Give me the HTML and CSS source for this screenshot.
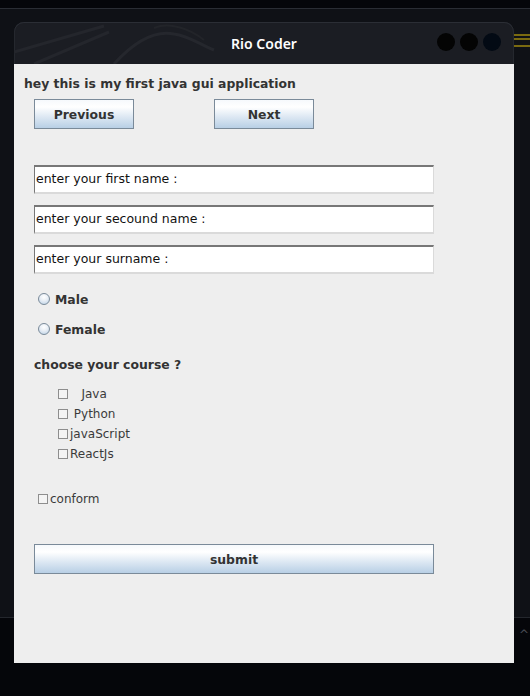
FILE: index.html
```html
<!DOCTYPE html>
<html>
<head>
<meta charset="utf-8">
<link rel="stylesheet" href="styles.css">
</head>
<body>
<div class="desktop">
  <div class="deco-lines"><span></span><span></span><span></span></div>
  <div class="deco-chevron">^</div>
  <div class="window">
    <div class="titlebar">
      <svg class="dragon" width="300" height="42" viewBox="0 0 300 42">
        <path d="M0 30 L90 4" stroke="#24262c" stroke-width="3" fill="none"/>
        <path d="M20 42 L95 10" stroke="#24262c" stroke-width="3" fill="none"/>
        <path d="M100 42 C120 20 140 8 160 12 C175 14 185 22 200 28" stroke="#25272d" stroke-width="3" fill="none"/>
        <path d="M140 6 C155 0 175 6 190 18" stroke="#222429" stroke-width="2" fill="none"/>
      </svg>
      <div class="title">Rio Coder</div>
      <div class="controls">
        <span class="dot"></span><span class="dot"></span><span class="dot blue"></span>
      </div>
    </div>
    <div class="content">
      <div class="heading">hey this is my first java gui application</div>
      <div class="nav-row">
        <button class="btn nav">Previous</button>
        <button class="btn nav">Next</button>
      </div>
      <div class="fields">
        <div class="field">enter your first name :</div>
        <div class="field">enter your secound name :</div>
        <div class="field">enter your surname :</div>
      </div>
      <div class="radios">
        <div class="radio-row"><span class="radio"></span><span class="radio-label">Male</span></div>
        <div class="radio-row"><span class="radio"></span><span class="radio-label">Female</span></div>
      </div>
      <div class="section-label">choose your course ?</div>
      <div class="courses">
        <div class="check-row"><span class="box"></span><span class="check-label">   Java</span></div>
        <div class="check-row"><span class="box"></span><span class="check-label"> Python</span></div>
        <div class="check-row"><span class="box"></span><span class="check-label">javaScript</span></div>
        <div class="check-row"><span class="box"></span><span class="check-label">ReactJs</span></div>
      </div>
      <div class="check-row conform"><span class="box"></span><span class="check-label">conform</span></div>
      <button class="btn submit">submit</button>
    </div>
  </div>
</div>
</body>
</html>
```
FILE: styles.css
```css
html, body {
  margin: 0;
  padding: 0;
}
body {
  width: 530px;
  height: 696px;
  overflow: hidden;
  background:
    linear-gradient(#05060a 0, #05060a 8px, #2a2d34 8px, #2a2d34 9px, #0f1116 9px, #0f1116 617px, #24272d 617px, #24272d 618px, #05060a 618px);
}
.desktop {
  position: relative;
  width: 530px;
  height: 696px;
  padding-top: 22px;
  box-sizing: border-box;
  font-family: "DejaVu Sans", sans-serif;
}
.deco-lines {
  position: absolute;
  left: 514px;
  top: 34px;
  width: 16px;
}
.deco-lines span {
  display: block;
  height: 2px;
  background: #7a6a10;
  margin-bottom: 2px;
}
.deco-lines span:nth-child(3) {
  margin-top: 5px;
}
.deco-chevron {
  position: absolute;
  left: 519px;
  top: 628px;
  color: #4a4d55;
  font-size: 12px;
}
.window {
  margin-left: 14px;
  width: 500px;
}
.titlebar {
  position: relative;
  height: 42px;
  background: #1b1d23;
  border-radius: 10px 10px 0 0;
  box-shadow: inset 0 1px 0 #2b2e35, inset 1px 0 0 #25282e, inset -1px 0 0 #25282e;
  display: flex;
  align-items: center;
  justify-content: center;
  overflow: hidden;
}
.dragon {
  position: absolute;
  left: 0;
  top: 0;
}
.title {
  position: relative;
  color: #ffffff;
  font-family: "Noto Sans", sans-serif;
  font-weight: 600;
  font-size: 14px;
}
.controls {
  position: absolute;
  right: 13px;
  top: 11px;
  display: flex;
  gap: 5px;
}
.dot {
  width: 18px;
  height: 18px;
  border-radius: 50%;
  background: #040404;
}
.dot.blue {
  background: #030a14;
}
.content {
  height: 599px;
  background: #eeeeee;
  padding: 12px 0 0 10px;
  box-sizing: border-box;
  color: #333333;
}
.heading {
  font-weight: bold;
  font-size: 12.4px;
  line-height: 16px;
  height: 16px;
}
.nav-row {
  display: flex;
  gap: 80px;
  margin: 7px 0 0 10px;
}
.btn {
  font-family: "DejaVu Sans", sans-serif;
  font-weight: bold;
  font-size: 12.4px;
  color: #333333;
  border: 1px solid #7a8a99;
  background: linear-gradient(#f6f9fc 0%, #ffffff 25%, #dde8f3 60%, #b8cfe5 100%);
  height: 30px;
  padding: 0;
  margin: 0;
  box-sizing: border-box;
}
.btn.nav {
  width: 100px;
}
.fields {
  margin: 36px 0 0 10px;
  display: flex;
  flex-direction: column;
  gap: 11px;
}
.field {
  width: 400px;
  height: 29px;
  box-sizing: border-box;
  background: #ffffff;
  border-top: 2px solid #777777;
  border-left: 1px solid #777777;
  border-right: 1px solid #dadada;
  border-bottom: 2px solid #dadada;
  font-size: 12.5px;
  line-height: 24px;
  padding-left: 1px;
  color: #111111;
}
.radios {
  margin: 15px 0 0 14px;
  display: flex;
  flex-direction: column;
  gap: 10px;
}
.radio-row {
  display: flex;
  align-items: center;
  height: 20px;
  gap: 5px;
}
.radio {
  width: 12px;
  height: 12px;
  box-sizing: border-box;
  border-radius: 50%;
  border: 1px solid #7a8a99;
  background: radial-gradient(circle at 50% 30%, #ffffff 0%, #e8eef5 45%, #b8cfe5 100%);
}
.radio-label {
  font-weight: bold;
  font-size: 12.4px;
}
.section-label {
  margin: 18px 0 0 10px;
  font-weight: bold;
  font-size: 12.4px;
  line-height: 16px;
  height: 16px;
}
.courses {
  margin: 11px 0 0 34px;
}
.check-row {
  display: flex;
  align-items: center;
  height: 20px;
  gap: 2px;
}
.box {
  width: 10px;
  height: 10px;
  box-sizing: border-box;
  border: 1px solid #8e8e8e;
  background: #f4f4f4;
}
.check-label {
  white-space: pre;
  font-size: 12px;
  color: #3a3a3a;
}
.conform {
  margin: 25px 0 0 14px;
}
.submit {
  display: block;
  margin: 35px 0 0 10px;
  width: 400px;
}
```
